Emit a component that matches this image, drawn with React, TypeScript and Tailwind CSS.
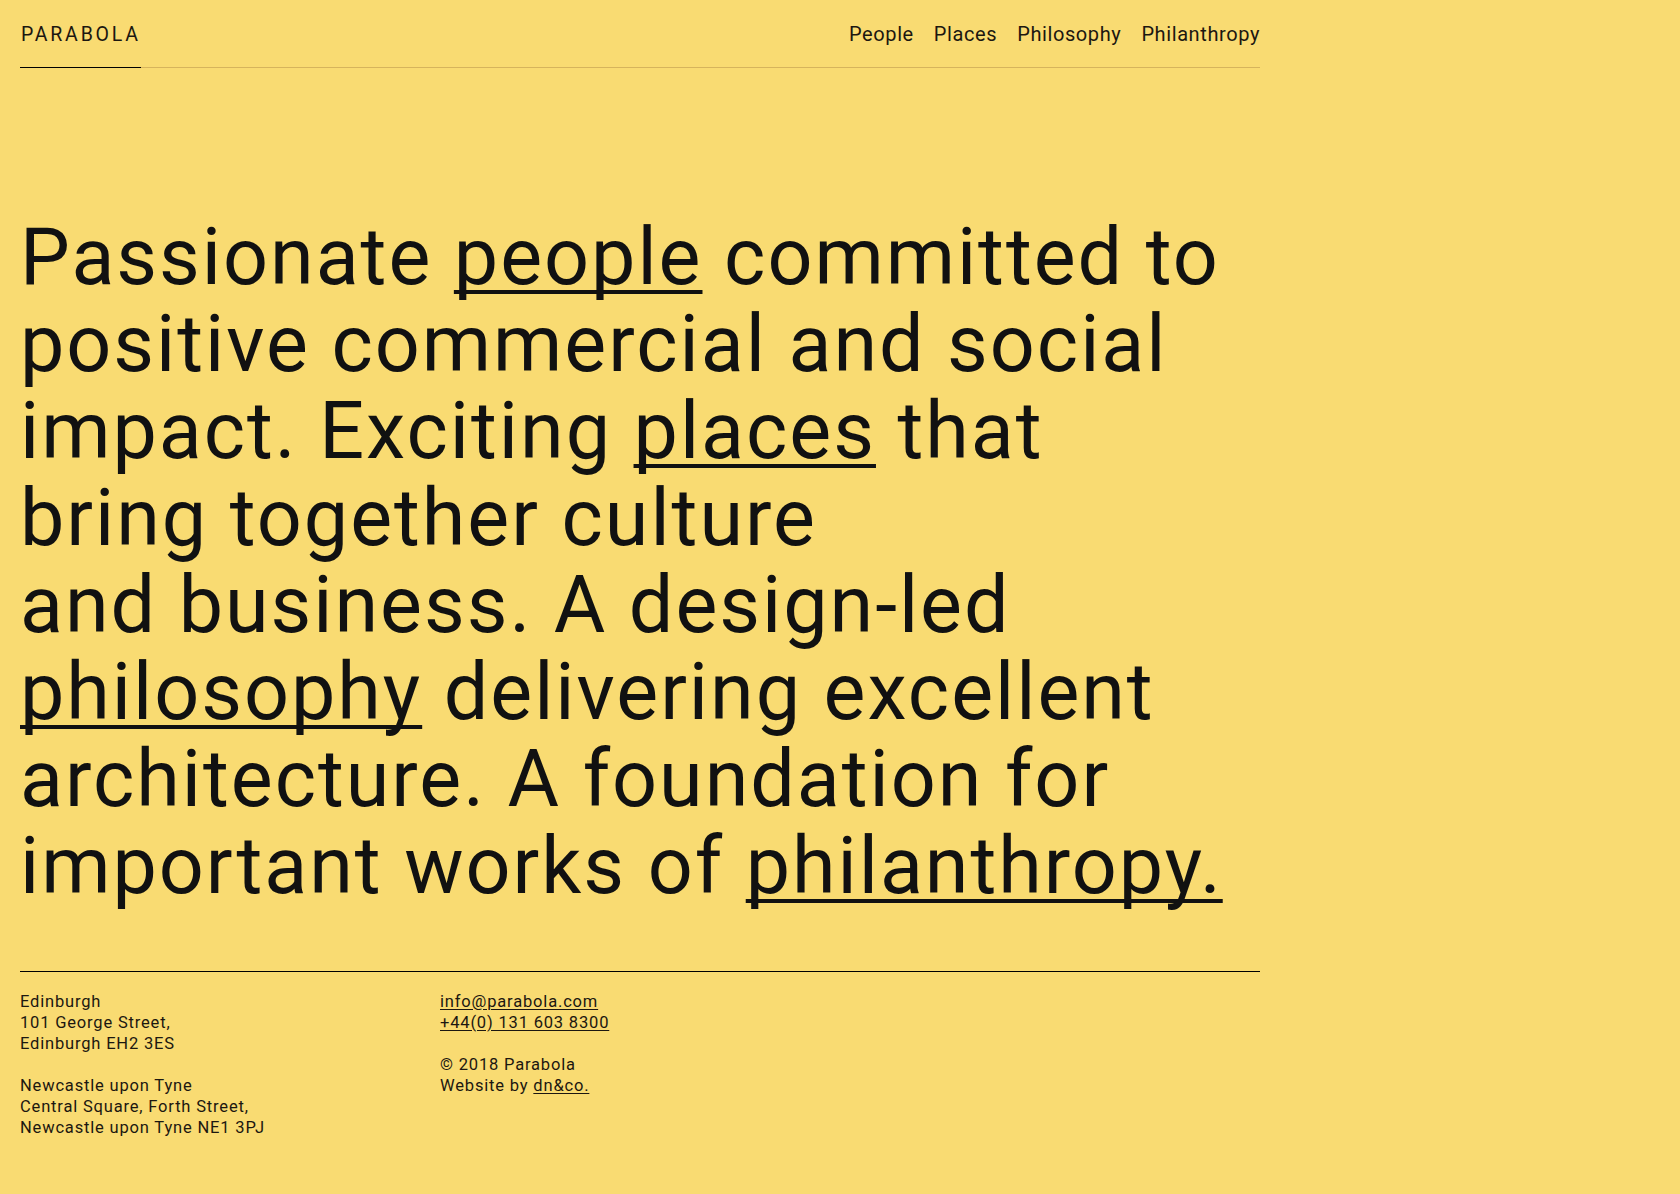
import React from 'react';

const links = ['People', 'Places', 'Philosophy', 'Philanthropy'];

const Under: React.FC<{ children: React.ReactNode }> = ({ children }) => (
  <a className="underline decoration-[4px] underline-offset-[6px] [text-decoration-skip-ink:none]">{children}</a>
);

export default function App() {
  return (
    <div className="min-h-screen bg-[#f9db72] text-[#111] font-['Roboto','Liberation_Sans',sans-serif]">
      <div className="ml-[20px] w-[1240px]">
        <header className="flex justify-between border-b border-[#d6b45c]">
          <div className="-mb-px border-b border-black pt-[21px] pb-[18px] pl-px text-[19.5px] leading-[28px] tracking-[2.8px] text-[#1c1710]">
            PARABOLA
          </div>
          <nav className="flex gap-[20px] pt-[20px] text-[20px] leading-[28px] tracking-[0.03em] text-[#1c1710]">
            {links.map((l) => (
              <a key={l}>{l}</a>
            ))}
          </nav>
        </header>

        <main className="pt-[146px] pb-[61px]">
          <h1 className="text-[79px] leading-[87px] font-normal tracking-[0.025em]">
            Passionate <Under>people</Under> committed to
            <br />
            positive commercial and social
            <br />
            impact. Exciting <Under>places</Under> that
            <br />
            bring together culture
            <br />
            and business. A design-led
            <br />
            <Under>philosophy</Under> delivering excellent
            <br />
            architecture. A foundation for
            <br />
            important works of <Under>philanthropy.</Under>
          </h1>
        </main>

        <footer className="grid grid-cols-[420px_1fr] border-t border-black pt-[19px] text-[16.5px] leading-[21px] tracking-[0.05em] text-[#1c1710]">
          <div className="flex flex-col gap-[21px]">
            <p>
              Edinburgh
              <br />
              101 George Street,
              <br />
              Edinburgh EH2 3ES
            </p>
            <p>
              Newcastle upon Tyne
              <br />
              Central Square, Forth Street,
              <br />
              Newcastle upon Tyne NE1 3PJ
            </p>
          </div>
          <div className="flex flex-col gap-[21px]">
            <p>
              <a className="underline underline-offset-2">info@parabola.com</a>
              <br />
              <a className="underline underline-offset-2">+44(0) 131 603 8300</a>
            </p>
            <p>
              © 2018 Parabola
              <br />
              Website by <a className="underline underline-offset-2">dn&amp;co.</a>
            </p>
          </div>
        </footer>
      </div>
    </div>
  );
}
